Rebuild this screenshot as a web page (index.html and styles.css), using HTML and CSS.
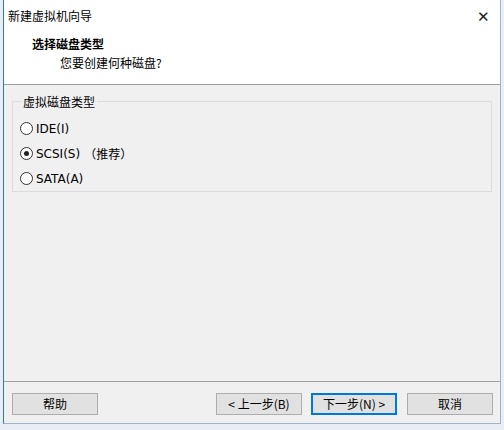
FILE: index.html
```html
<!DOCTYPE html>
<html lang="zh">
<head>
  <meta charset="UTF-8" />
  <title>新建虚拟机向导</title>
  <link rel="stylesheet" href="styles.css">
</head>
<body>
  <div class="window">
    <div class="titlebar">
      <span class="title">新建虚拟机向导</span>
      <span class="close">&#x2715;</span>
    </div>
    <div class="header">
      <div class="h-title">选择磁盘类型</div>
      <div class="h-sub">您要创建何种磁盘?</div>
    </div>
    <div class="content">
      <fieldset class="group">
        <legend>虚拟磁盘类型</legend>
        <label class="radio"><span class="dot"></span>IDE(I)</label>
        <label class="radio"><span class="dot checked"></span>SCSI(S) <span class="rec">（推荐）</span></label>
        <label class="radio"><span class="dot"></span>SATA(A)</label>
      </fieldset>
    </div>
    <div class="footer">
      <button class="btn">帮助</button>
      <div class="spacer"></div>
      <button class="btn btn-prev">&lt; 上一步(B)</button>
      <button class="btn btn-default">下一步(N) &gt;</button>
      <button class="btn">取消</button>
    </div>
  </div>
</body>
</html>
```

FILE: styles.css
```css
body {
  margin: 0;
  background: #e8eef4;
  font-family: "Noto Sans CJK SC", "Liberation Sans", sans-serif;
  font-size: 12px;
  color: #000;
  height: 430px;
  overflow: hidden;
}
.window {
  margin-left: 3px;
  width: 496px;
  height: 423px;
  border-left: 1px solid #2b79c2;
  border-right: 1px solid #9db4cc;
  border-bottom: 1px solid #9db4cc;
  background: #f0f0f0;
  display: flex;
  flex-direction: column;
}
.titlebar {
  height: 30px;
  background: white;
  display: flex;
  align-items: center;
  justify-content: space-between;
  padding: 0 8px 0 4px;
}
.title {
  font-size: 12px;
  color: #000;
}
.close {
  font-size: 15px;
  color: #222;
  margin-right: 2px;
}
.header {
  background: white;
  height: 55px;
  border-bottom: 1px solid #a0a0a0;
  padding-left: 28px;
  box-sizing: border-box;
}
.h-title {
  font-weight: bold;
  font-size: 12px;
  line-height: 16px;
  margin-top: 6px;
}
.h-sub {
  margin-left: 28px;
  line-height: 16px;
  margin-top: 3px;
}
.content {
  flex: 1;
  padding: 8px 8px 0 8px;
}
.group {
  margin: 0;
  border: 1px solid #dcdcdc;
  padding: 6px 8px 8px 7px;
  height: 99px;
  box-sizing: border-box;
}
.group legend {
  padding: 0 2px;
  margin-left: 1px;
}
.radio {
  display: flex;
  align-items: center;
  height: 25px;
  font-family: "DejaVu Sans", "Noto Sans CJK SC", sans-serif;
  font-size: 12px;
}
.rec {
  font-family: "Noto Sans CJK SC", sans-serif;
  margin-left: 4px;
}
.dot {
  width: 11px;
  height: 11px;
  border: 1px solid #333;
  border-radius: 50%;
  background: white;
  margin-right: 3px;
  position: relative;
}
.dot.checked::after {
  content: "";
  position: absolute;
  left: 3px;
  top: 3px;
  width: 5px;
  height: 5px;
  border-radius: 50%;
  background: #222;
}
.footer {
  height: 41px;
  border-top: 1px solid #a0a0a0;
  display: flex;
  align-items: center;
  padding: 0 7px 0 8px;
  gap: 10px;
}
.spacer {
  flex: 1;
}
.btn {
  width: 86px;
  height: 22px;
  background: #e1e1e1;
  border: 1px solid #adadad;
  font-family: "Noto Sans CJK SC", "DejaVu Sans", sans-serif;
  font-size: 12px;
  padding: 0;
  margin-top: 2px;
}
.btn-prev {
  margin-right: -1px;
}
.btn-default {
  border: 2px solid #0078d7;
}
```
